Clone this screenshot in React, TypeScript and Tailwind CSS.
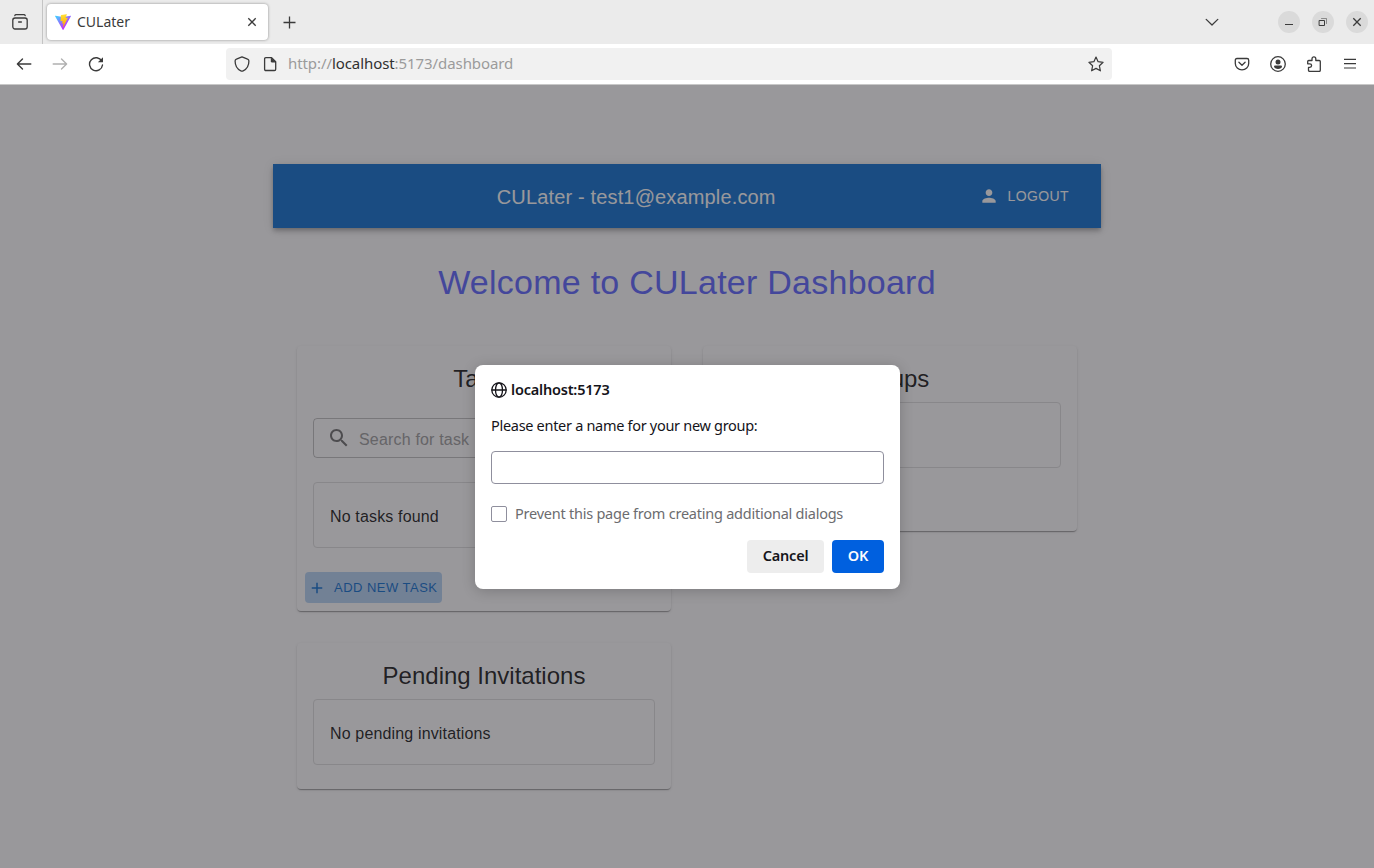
import type { ReactNode } from "react";

const uiFont = "font-['Noto_Sans','Open_Sans',sans-serif]";
const pageFont = "font-['Liberation_Sans',Arial,sans-serif]";
const cardShadow =
  "shadow-[0_2px_1px_-1px_rgba(0,0,0,0.2),0_1px_1px_0_rgba(0,0,0,0.14),0_1px_3px_0_rgba(0,0,0,0.12)]";

function Icon({ children, className = "" }: { children: ReactNode; className?: string }) {
  return (
    <svg
      viewBox="0 0 16 16"
      className={`size-4 shrink-0 ${className}`}
      fill="none"
      stroke="currentColor"
      strokeWidth="1.3"
      strokeLinecap="round"
      strokeLinejoin="round"
    >
      {children}
    </svg>
  );
}

function ViteLogo() {
  return (
    <svg viewBox="0 0 256 257" className="size-4 shrink-0">
      <defs>
        <linearGradient id="shell" x1="-.828%" x2="57.636%" y1="7.652%" y2="78.411%">
          <stop offset="0%" stopColor="#41D1FF" />
          <stop offset="100%" stopColor="#BD34FE" />
        </linearGradient>
        <linearGradient id="bolt" x1="43.376%" x2="50.316%" y1="2.242%" y2="89.03%">
          <stop offset="0%" stopColor="#FFEA83" />
          <stop offset="8.333%" stopColor="#FFDD35" />
          <stop offset="100%" stopColor="#FFA800" />
        </linearGradient>
      </defs>
      <path
        fill="url(#shell)"
        d="M255.153 37.938L134.897 252.976c-2.483 4.44-8.862 4.466-11.382.048L.875 37.958c-2.746-4.814 1.371-10.646 6.827-9.67l120.385 21.517a6.537 6.537 0 0 0 2.322-.004l117.867-21.483c5.438-.991 9.574 4.796 6.877 9.62Z"
      />
      <path
        fill="url(#bolt)"
        d="M185.432.063L96.44 17.501a3.268 3.268 0 0 0-2.634 3.014l-5.474 92.456a3.268 3.268 0 0 0 3.997 3.378l24.777-5.718c2.318-.535 4.413 1.507 3.936 3.838l-7.361 36.047c-.495 2.426 1.782 4.5 4.151 3.78l15.304-4.649c2.372-.72 4.652 1.36 4.15 3.788l-11.698 56.621c-.732 3.542 3.979 5.473 5.943 2.437l1.313-2.028l72.516-144.72c1.215-2.423-.88-5.186-3.54-4.672l-25.505 4.922c-2.396.462-4.435-1.77-3.759-4.114l16.646-57.705c.677-2.35-1.37-4.583-3.769-4.113Z"
      />
    </svg>
  );
}

function TabBar() {
  return (
    <div className="flex h-11 shrink-0 items-center bg-[#ebebeb] text-[#3b3b3b]">
      <div className="flex h-full w-[43px] items-center border-r border-[#c4c4c4] pl-3">
        <Icon>
          <rect x="0.8" y="4" width="14.4" height="11" rx="2.2" />
          <path d="M2.800 1.600Q3.100 .7 4 .7h8q.9 0 1.200 .9" />
          <path d="M6.600 8h2.800" />
        </Icon>
      </div>
      <div className="ml-1 flex h-9 w-[221px] items-center rounded bg-white pl-2 shadow-[0_0_3px_rgba(0,0,0,0.4)]">
        <ViteLogo />
        <span className="ml-[6px] flex-1 text-[14px] leading-5">CULater</span>
        <Icon className="mr-2">
          <path d="M4.300 4.300l7.400 7.400M11.700 4.300l-7.400 7.400" strokeLinecap="butt" />
        </Icon>
      </div>
      <Icon className="ml-[14px]">
        <path d="M7.500 2.500v12M1.500 8.500h12" strokeLinecap="butt" />
      </Icon>
      <div className="ml-auto flex items-center gap-3 pr-[6px]">
        <Icon className="mr-[46px]">
          <path d="M2.200 5.400L8 11l5.800-5.600" />
        </Icon>
        <span className="flex size-[22px] items-center justify-center rounded-full bg-[#dadada]">
          <Icon>
            <path d="M4 10.500h8" strokeWidth="1" strokeLinecap="butt" />
          </Icon>
        </span>
        <span className="flex size-[22px] items-center justify-center rounded-full bg-[#dadada]">
          <Icon>
            <path d="M4.500 6.500h5v5h-5z" strokeWidth="1" strokeLinejoin="miter" />
            <path d="M6.500 4.500h5v5" strokeWidth="1" strokeOpacity="0.5" strokeLinejoin="miter" />
          </Icon>
        </span>
        <span className="flex size-[22px] items-center justify-center rounded-full bg-[#dadada]">
          <Icon>
            <path d="M4.300 4.300l7.400 7.400M11.700 4.300l-7.400 7.400" strokeLinecap="butt" />
          </Icon>
        </span>
      </div>
    </div>
  );
}

function NavBar() {
  return (
    <div className="flex h-[41px] shrink-0 items-center border-b border-[#c8c8c8] bg-white px-4 text-[#3b3b3b]">
      <div className="flex w-[210px] gap-5">
        <Icon>
          <path d="M6.500 2.900L1.400 8l5.100 5.100M1.600 8h13.200" strokeWidth="1.400" />
        </Icon>
        <Icon className="text-[#b0b0b0]">
          <path d="M9.500 2.900L14.600 8l-5.100 5.100M14.400 8H1.200" strokeWidth="1.400" />
        </Icon>
        <Icon>
          <path d="M13.800 5.200A6.500 6.500 0 1 0 14.500 9" strokeWidth="1.400" />
          <path d="M15 1.200v5.100H9.900z" fill="currentColor" stroke="none" />
        </Icon>
      </div>
      <div className="flex h-8 w-[886px] items-center rounded bg-[#f1f1f1] px-2">
        <Icon>
          <path d="M8 .8l5.600 2.300q1.300 .5 1.300 1.900c0 4.800-2.200 8.200-5.800 9.900q-1.100 .5-2.200 0C3.300 13.200 1.100 9.800 1.100 5q0-1.400 1.300-1.900z" />
        </Icon>
        <Icon className="ml-3">
          <path d="M3.700 1.600h5.900L13.700 5.700v7.500q0 1.300-1.300 1.300H3.900q-1.300 0-1.300-1.300V2.900q0-1.300 1.300-1.300z" />
          <path d="M8.800 1.200L14.200 6.600H10.200Q8.800 6.600 8.800 5.200z" fill="currentColor" stroke="none" />
        </Icon>
        <span className="ml-[10px] flex-1 pb-[2px] text-[15px] leading-5 tracking-[-0.080px] text-[#9b9b9b]">
          http://<span className="text-[#303030]">localhost</span>:5173/dashboard
        </span>
        <Icon>
          <path
            d="M8 1l2.100 4.700 5 .6-3.700 3.500 1 5L8 12.400l-4.400 2.400 1-5L.9 6.300l5-.6z"
            strokeWidth="1.200"
          />
        </Icon>
      </div>
      <div className="ml-auto flex gap-5">
        <Icon>
          <path d="M3 2.500h10q1.700 0 1.700 1.700V7.500A6.700 6.300 0 0 1 1.300 7.500V4.200Q1.300 2.500 3 2.500z" />
          <path d="M4.900 6.300L8 9.200l3.100-2.900" />
        </Icon>
        <Icon>
          <circle cx="8" cy="8" r="7.300" />
          <circle cx="8" cy="6" r="2.500" fill="currentColor" stroke="none" />
          <path d="M5 9.600h6q1 0 1 1c0 1.300-2 2.400-4 2.400s-4-1.100-4-2.400q0-1 1-1z" fill="currentColor" stroke="none" />
        </Icon>
        <Icon>
          <path d="M2.700 4.500H6V2.800a1.900 1.900 0 0 1 3.800 0V4.500h3.400q1.100 0 1.100 1.100v8.700q0 1.100-1.100 1.100H3.600q-1.100 0-1.100-1.100V11.400H3.800a1.800 1.800 0 0 0 0-3.600H1.700V5.500q0-1 1-1z" />
        </Icon>
        <Icon>
          <path d="M2 3.400h12M2 7.700h12M2 12h12" strokeLinecap="butt" strokeWidth="1.200" />
        </Icon>
      </div>
    </div>
  );
}

function Card({ children }: { children: ReactNode }) {
  return <section className={`flex flex-col rounded bg-white ${cardShadow}`}>{children}</section>;
}

function CardTitle({ children }: { children: ReactNode }) {
  return <h2 className="mt-4 h-8 pt-px text-center text-[24px] leading-8">{children}</h2>;
}

function OutlinedBox({ children, className = "" }: { children?: ReactNode; className?: string }) {
  return (
    <div className={`mx-4 mb-6 flex h-[66px] items-center rounded border border-[#e0e0e0] px-4 pt-1 tracking-[0.150px] ${className}`}>
      {children}
    </div>
  );
}

function Dashboard() {
  return (
    <main className={`mx-auto flex w-[828px] flex-col pt-[79px] text-[rgba(0,0,0,0.87)] ${pageFont}`}>
      <header className="flex h-16 items-center bg-[#1976d2] px-6 text-white shadow-[0_2px_4px_-1px_rgba(0,0,0,0.2),0_4px_5px_0_rgba(0,0,0,0.14),0_1px_10px_0_rgba(0,0,0,0.12)]">
        <span className="flex-1 pt-[2px] pl-[2px] text-center text-[20px] leading-8 tracking-[0.150px]">
          CULater - test1@example.com
        </span>
        <button className="flex items-center gap-2 pr-2 pl-[6px] text-[14px] leading-6 tracking-[0.400px]">
          <svg viewBox="0 0 24 24" className="size-5" fill="currentColor">
            <path d="M12 12c2.210 0 4-1.790 4-4s-1.790-4-4-4-4 1.790-4 4 1.790 4 4 4m0 2c-2.670 0-8 1.340-8 4v2h16v-2c0-2.660-5.330-4-8-4" />
          </svg>
          LOGOUT
        </button>
      </header>
      <h1 className="mt-8 text-center text-[34px] leading-[44px] tracking-[0.250px] text-[#646cff]">
        Welcome to CULater Dashboard
      </h1>
      <div className="mt-[42px] grid grid-cols-2 items-start gap-8 px-6">
        <div className="flex flex-col gap-8">
          <Card>
            <CardTitle>Tasks</CardTitle>
            <div className="mx-4 my-6 flex h-10 items-center gap-2 rounded border border-[rgba(0,0,0,0.23)] px-[13px] text-[16px] text-[#a2a2a2]">
              <svg viewBox="0 0 24 24" className="size-6 text-[rgba(0,0,0,0.54)]" fill="currentColor">
                <path d="M15.500 14h-.790l-.280-.270C15.410 12.590 16 11.110 16 9.500 16 5.910 13.090 3 9.500 3S3 5.910 3 9.500 5.910 16 9.500 16c1.610 0 3.090-.590 4.230-1.570l.270.280v.790l5 4.990L20.490 19zm-6 0C7.010 14 5 11.990 5 9.500S7.010 5 9.500 5 14 7.010 14 9.500 11.990 14 9.500 14" />
              </svg>
              <span className="pt-1 tracking-[0.180px]">Search for task</span>
            </div>
            <OutlinedBox>No tasks found</OutlinedBox>
            <button className="mb-2 ml-2 flex h-[31px] w-[137px] items-center gap-2 rounded bg-[#b9d5f5] pl-[3px] text-[13px] tracking-[0.480px] whitespace-nowrap text-[#1976d2]">
              <svg viewBox="0 0 24 24" className="size-[18px] shrink-0" fill="currentColor">
                <path d="M19 13h-6v6h-2v-6H5v-2h6V5h2v6h6z" />
              </svg>
              ADD NEW TASK
            </button>
          </Card>
          <Card>
            <CardTitle>Pending Invitations</CardTitle>
            <OutlinedBox className="mt-2">No pending invitations</OutlinedBox>
          </Card>
        </div>
        <Card>
          <CardTitle>Groups</CardTitle>
          <OutlinedBox className="mt-2" />
          <div className="mb-2 h-[31px]" />
        </Card>
      </div>
    </main>
  );
}

function PromptDialog() {
  return (
    <div
      role="dialog"
      className="flex h-56 w-[425px] flex-col rounded-lg bg-white px-4 pt-4 text-[14.500px] text-[#15141a] shadow-[0_2px_14px_rgba(0,0,0,0.2)]"
    >
      <div className="flex h-[18px] items-center gap-[4px] font-semibold">
        <Icon>
          <circle cx="8" cy="8" r="7.200" />
          <ellipse cx="8" cy="8" rx="3.500" ry="7.200" />
          <path d="M1 8h14" />
        </Icon>
        <span className="tracking-[-0.200px]">localhost:5173</span>
      </div>
      <p className="mt-4 h-[21px] leading-5 tracking-[-0.300px]">Please enter a name for your new group:</p>
      <input className="mt-[15px] h-[33px] shrink-0 rounded border border-[#8f8f9d] bg-white outline-none" />
      <label className="mt-5 flex h-5 items-center gap-2 text-[#6c6c6f]">
        <span className="size-4 shrink-0 rounded-[2px] border border-[#8f8f9d]" />
        <span className="tracking-[-0.240px] whitespace-nowrap">
          Prevent this page from creating additional dialogs
        </span>
      </label>
      <div className="mt-4 flex justify-end gap-2 font-semibold">
        <button className="h-[33px] w-[77px] rounded bg-[#ededed] pb-[2px] tracking-[-0.200px]">Cancel</button>
        <button className="h-[33px] w-[52px] rounded bg-[#0060df] pb-[2px] tracking-[-0.200px] text-[#fbfbfe]">OK</button>
      </div>
    </div>
  );
}

export default function App() {
  return (
    <div className={`flex h-[868px] w-[1374px] flex-col overflow-hidden bg-white ${uiFont}`}>
      <TabBar />
      <NavBar />
      <div className="relative flex-1">
        <Dashboard />
        <div className="absolute inset-0 flex items-start justify-center bg-[rgba(28,27,34,0.45)] pt-[280px] pl-px">
          <PromptDialog />
        </div>
      </div>
    </div>
  );
}
